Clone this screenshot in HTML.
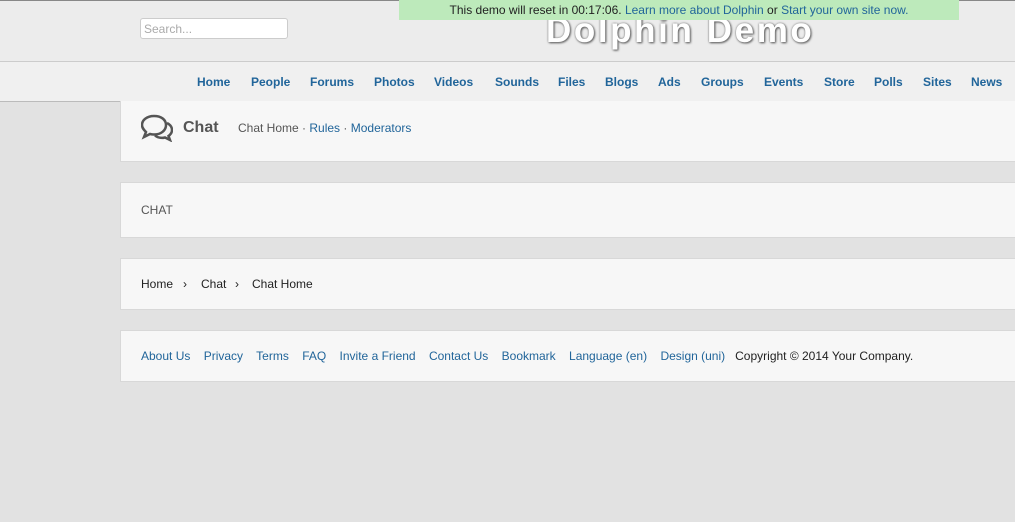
<!DOCTYPE html>
<html><head><style>
body{margin:0;width:1015px;height:522px;overflow:hidden;background:#e2e2e2;font-family:"Liberation Sans",Arial,sans-serif;font-size:12px;position:relative}
.top{position:absolute;left:0;top:0;width:1015px;height:61px;background:#ececec;border-top:1px solid #888}
.nav{position:absolute;left:0;top:61px;width:1015px;height:39px;background:#f0f0f0;border-top:1px solid #ccc;border-bottom:1px solid #bbb}
.nav a{position:absolute;top:13px;color:#21659a;font-weight:bold;font-size:12px;text-decoration:none}
.search{position:absolute;left:140px;top:18px;width:148px;height:21px;border:1px solid #ccc;border-radius:3px;background:#fff;color:#aaa;font-size:12px;line-height:21px;padding-left:3px;box-sizing:border-box}
.demo{position:absolute;left:399px;top:0;width:560px;height:20px;background:#bdeabb;text-align:center;line-height:21px;color:#222;font-size:12px}
.demo a{color:#21659a}
.logo{position:absolute;left:546px;top:11px;font-size:35px;font-weight:bold;color:#fff;letter-spacing:2.6px;text-shadow:0 0 2px #777,1px 1px 2px #555}
.box{position:absolute;left:120px;width:895px;background:#f7f7f7;border:1px solid #d8d8d8;border-right:none;box-sizing:border-box}
a{color:#21659a;text-decoration:none}
</style></head><body>
<div class="top"></div>
<div class="search">Search...</div>
<div class="logo">Dolphin Demo</div>
<div class="demo">This demo will reset in 00:17:06. <a>Learn more about Dolphin</a> or <a>Start your own site now.</a></div>
<div class="nav">
<a style="left:197px">Home</a><a style="left:251px">People</a><a style="left:310px">Forums</a><a style="left:374px">Photos</a><a style="left:434px">Videos</a><a style="left:495px">Sounds</a><a style="left:558px">Files</a><a style="left:605px">Blogs</a><a style="left:658px">Ads</a><a style="left:701px">Groups</a><a style="left:764px">Events</a><a style="left:824px">Store</a><a style="left:874px">Polls</a><a style="left:923px">Sites</a><a style="left:971px">News</a>
</div>
<div class="box" style="top:101px;height:61px;border-top:none">
<svg style="position:absolute;left:20px;top:13px" width="32" height="28" viewBox="0 0 32 28"><path d="M13 2C6 2 1 6 1 11c0 3 2 5 4 7l-2 5 6-3c1 .3 3 .5 4 .5 7 0 12-4 12-9.5S20 2 13 2z" fill="none" stroke="#555" stroke-width="2.5"/><path d="M26 9c3 1.5 5 4 5 7 0 2.5-1.5 4.5-3.5 6l1.5 4-5-2.5c-1 .3-2 .4-3 .4-3 0-5.5-1-7-2.5" fill="none" stroke="#555" stroke-width="2.5"/></svg>
<span style="position:absolute;left:62px;top:18px;font-size:16px;font-weight:bold;color:#555">Chat</span>
<span style="position:absolute;left:117px;top:20px;color:#555">Chat Home · <a>Rules</a> · <a>Moderators</a></span>
</div>
<div class="box" style="top:182px;height:56px"><span style="position:absolute;left:20px;top:20px;color:#555">CHAT</span></div>
<div class="box" style="top:258px;height:52px"><span style="position:absolute;left:20px;top:18px;color:#222">Home</span><span style="position:absolute;left:62px;top:18px;color:#222">›</span><span style="position:absolute;left:80px;top:18px;color:#222">Chat</span><span style="position:absolute;left:114px;top:18px;color:#222">›</span><span style="position:absolute;left:131px;top:18px;color:#222">Chat Home</span></div>
<div class="box" style="top:330px;height:52px"><span style="position:absolute;left:20px;top:18px;color:#222;word-spacing:0"><a>About Us</a>&nbsp;&nbsp;&nbsp; <a>Privacy</a>&nbsp;&nbsp;&nbsp; <a>Terms</a>&nbsp;&nbsp;&nbsp; <a>FAQ</a>&nbsp;&nbsp;&nbsp; <a>Invite a Friend</a>&nbsp;&nbsp;&nbsp; <a>Contact Us</a>&nbsp;&nbsp;&nbsp; <a>Bookmark</a>&nbsp;&nbsp;&nbsp; <a>Language (en)</a>&nbsp;&nbsp;&nbsp; <a>Design (uni)</a>&nbsp;&nbsp; Copyright © 2014 Your Company.</span></div>
</body></html>
